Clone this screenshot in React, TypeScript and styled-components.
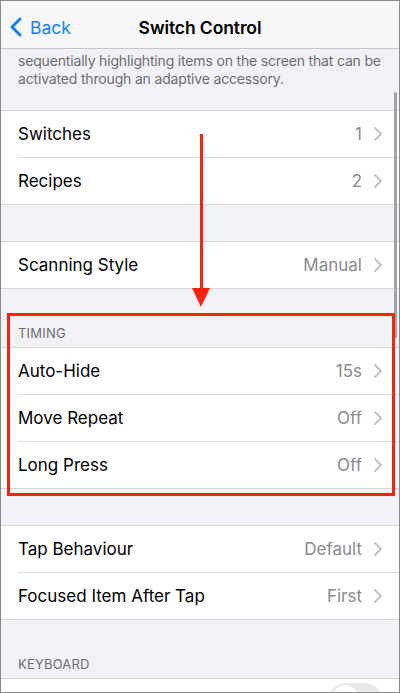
import React from 'react';
import styled, { createGlobalStyle } from 'styled-components';

const GlobalStyle = createGlobalStyle`
	html, body {
		margin: 0;
		padding: 0;
		background: #ffffff;
	}
	* {
		box-sizing: border-box;
	}
`;

const Frame = styled.div`
	position: relative;
	width: 400px;
	height: 693px;
	border: 1px solid #8a8a8a;
	background-color: #f1f1f6;
	overflow: hidden;
	font-family: Inter, 'Liberation Sans', sans-serif;
	color: #000000;
`;

const NavBar = styled.div`
	position: relative;
	height: 48px;
	display: flex;
	align-items: center;
	justify-content: center;
	padding-top: 5px;
	background-color: #f7f7f7;
	border-bottom: 1px solid #c6c6c9;
`;

const BackButton = styled.div`
	position: absolute;
	left: 8px;
	top: 5px;
	height: 42px;
	display: flex;
	align-items: center;
	gap: 8px;
	color: #157efb;
	font-size: 17.5px;
`;

const Title = styled.div`
	font-size: 17.5px;
	font-weight: 600;
	letter-spacing: -0.1px;
`;

const Description = styled.div`
	padding: 3px 17px 0;
	font-size: 14px;
	line-height: 18px;
	letter-spacing: -0.17px;
	white-space: nowrap;
	color: #6d6d72;
	margin-bottom: 22px;
`;

const Group = styled.div<{ $gap?: number }>`
	background-color: #ffffff;
	border-top: 1px solid #d6d6da;
	border-bottom: 1px solid #d6d6da;
	margin-bottom: ${(p) => p.$gap ?? 0}px;
`;

const Row = styled.div<{ $last?: boolean }>`
	height: ${(p) => (p.$last ? 46 : 47)}px;
	margin-left: 17px;
	padding-right: 17px;
	display: flex;
	align-items: center;
	border-bottom: ${(p) => (p.$last ? 'none' : '1px solid #dcdce0')};
	font-size: 17px;
`;

const Label = styled.div`
	flex: 1;
`;

const Value = styled.div`
	color: #8a8a8e;
	margin-right: 12px;
`;

const SectionHeader = styled.div`
	height: 58px;
	display: flex;
	align-items: flex-end;
	padding: 0 17px 6px;
	font-size: 13px;
	line-height: 16px;
	color: #6d6d72;
	letter-spacing: 0.2px;
`;

const ToggleRow = styled.div`
	height: 46px;
	display: flex;
	justify-content: flex-end;
	padding: 4px 18px 0 0;
`;

const Toggle = styled.div`
	width: 51px;
	height: 31px;
	border-radius: 16px;
	background-color: #e9e9eb;
	position: relative;
	&::after {
		content: '';
		position: absolute;
		left: 2px;
		top: 2px;
		width: 27px;
		height: 27px;
		border-radius: 50%;
		background: #ffffff;
		box-shadow: 0 2px 4px rgba(0, 0, 0, 0.15);
	}
`;

const ScrollBar = styled.div`
	position: absolute;
	left: 393px;
	top: 91px;
	width: 3px;
	height: 246px;
	border-radius: 2px;
	background-color: #a2a2a4;
`;

const Highlight = styled.div`
	position: absolute;
	left: 6px;
	top: 312px;
	width: 388px;
	height: 183px;
	border: 3px solid #f5230f;
	pointer-events: none;
`;

const Arrow = styled.svg`
	position: absolute;
	left: 190px;
	top: 133px;
`;

const Chevron = () => (
	<svg width="8" height="14" viewBox="0 0 8 14">
		<path d="M1 1 L7 7 L1 13" fill="none" stroke="#c4c4c7" strokeWidth="2" strokeLinecap="round" strokeLinejoin="round" />
	</svg>
);

const BackChevron = () => (
	<svg width="13" height="20" viewBox="0 0 13 20">
		<path d="M11 2 L3 10 L11 18" fill="none" stroke="#157efb" strokeWidth="3" strokeLinecap="round" strokeLinejoin="round" />
	</svg>
);

type Item = { label: string; value: string };

const ItemGroup = ({ items, gap }: { items: Item[]; gap?: number }) => (
	<Group $gap={gap}>
		{items.map((item, i) => (
			<Row key={item.label} $last={i === items.length - 1}>
				<Label>{item.label}</Label>
				<Value>{item.value}</Value>
				<Chevron />
			</Row>
		))}
	</Group>
);

const App = () => {
	return (
		<Frame>
			<GlobalStyle />
			<NavBar>
				<BackButton>
					<BackChevron />
					Back
				</BackButton>
				<Title>Switch Control</Title>
			</NavBar>
			<Description>
				sequentially highlighting items on the screen that can be
				<br />
				activated through an adaptive accessory.
			</Description>
			<ItemGroup
				gap={36}
				items={[
					{ label: 'Switches', value: '1' },
					{ label: 'Recipes', value: '2' },
				]}
			/>
			<ItemGroup items={[{ label: 'Scanning Style', value: 'Manual' }]} />
			<SectionHeader>TIMING</SectionHeader>
			<ItemGroup
				gap={36}
				items={[
					{ label: 'Auto-Hide', value: '15s' },
					{ label: 'Move Repeat', value: 'Off' },
					{ label: 'Long Press', value: 'Off' },
				]}
			/>
			<ItemGroup
				items={[
					{ label: 'Tap Behaviour', value: 'Default' },
					{ label: 'Focused Item After Tap', value: 'First' },
				]}
			/>
			<SectionHeader>KEYBOARD</SectionHeader>
			<Group>
				<ToggleRow>
					<Toggle />
				</ToggleRow>
			</Group>
			<ScrollBar />
			<Highlight />
			<Arrow width="20" height="175" viewBox="0 0 20 175">
				<rect x="9" y="0" width="3" height="156" fill="#f5230f" />
				<polygon points="1,154 19,154 10,173" fill="#f5230f" />
			</Arrow>
		</Frame>
	);
};

export default App;
